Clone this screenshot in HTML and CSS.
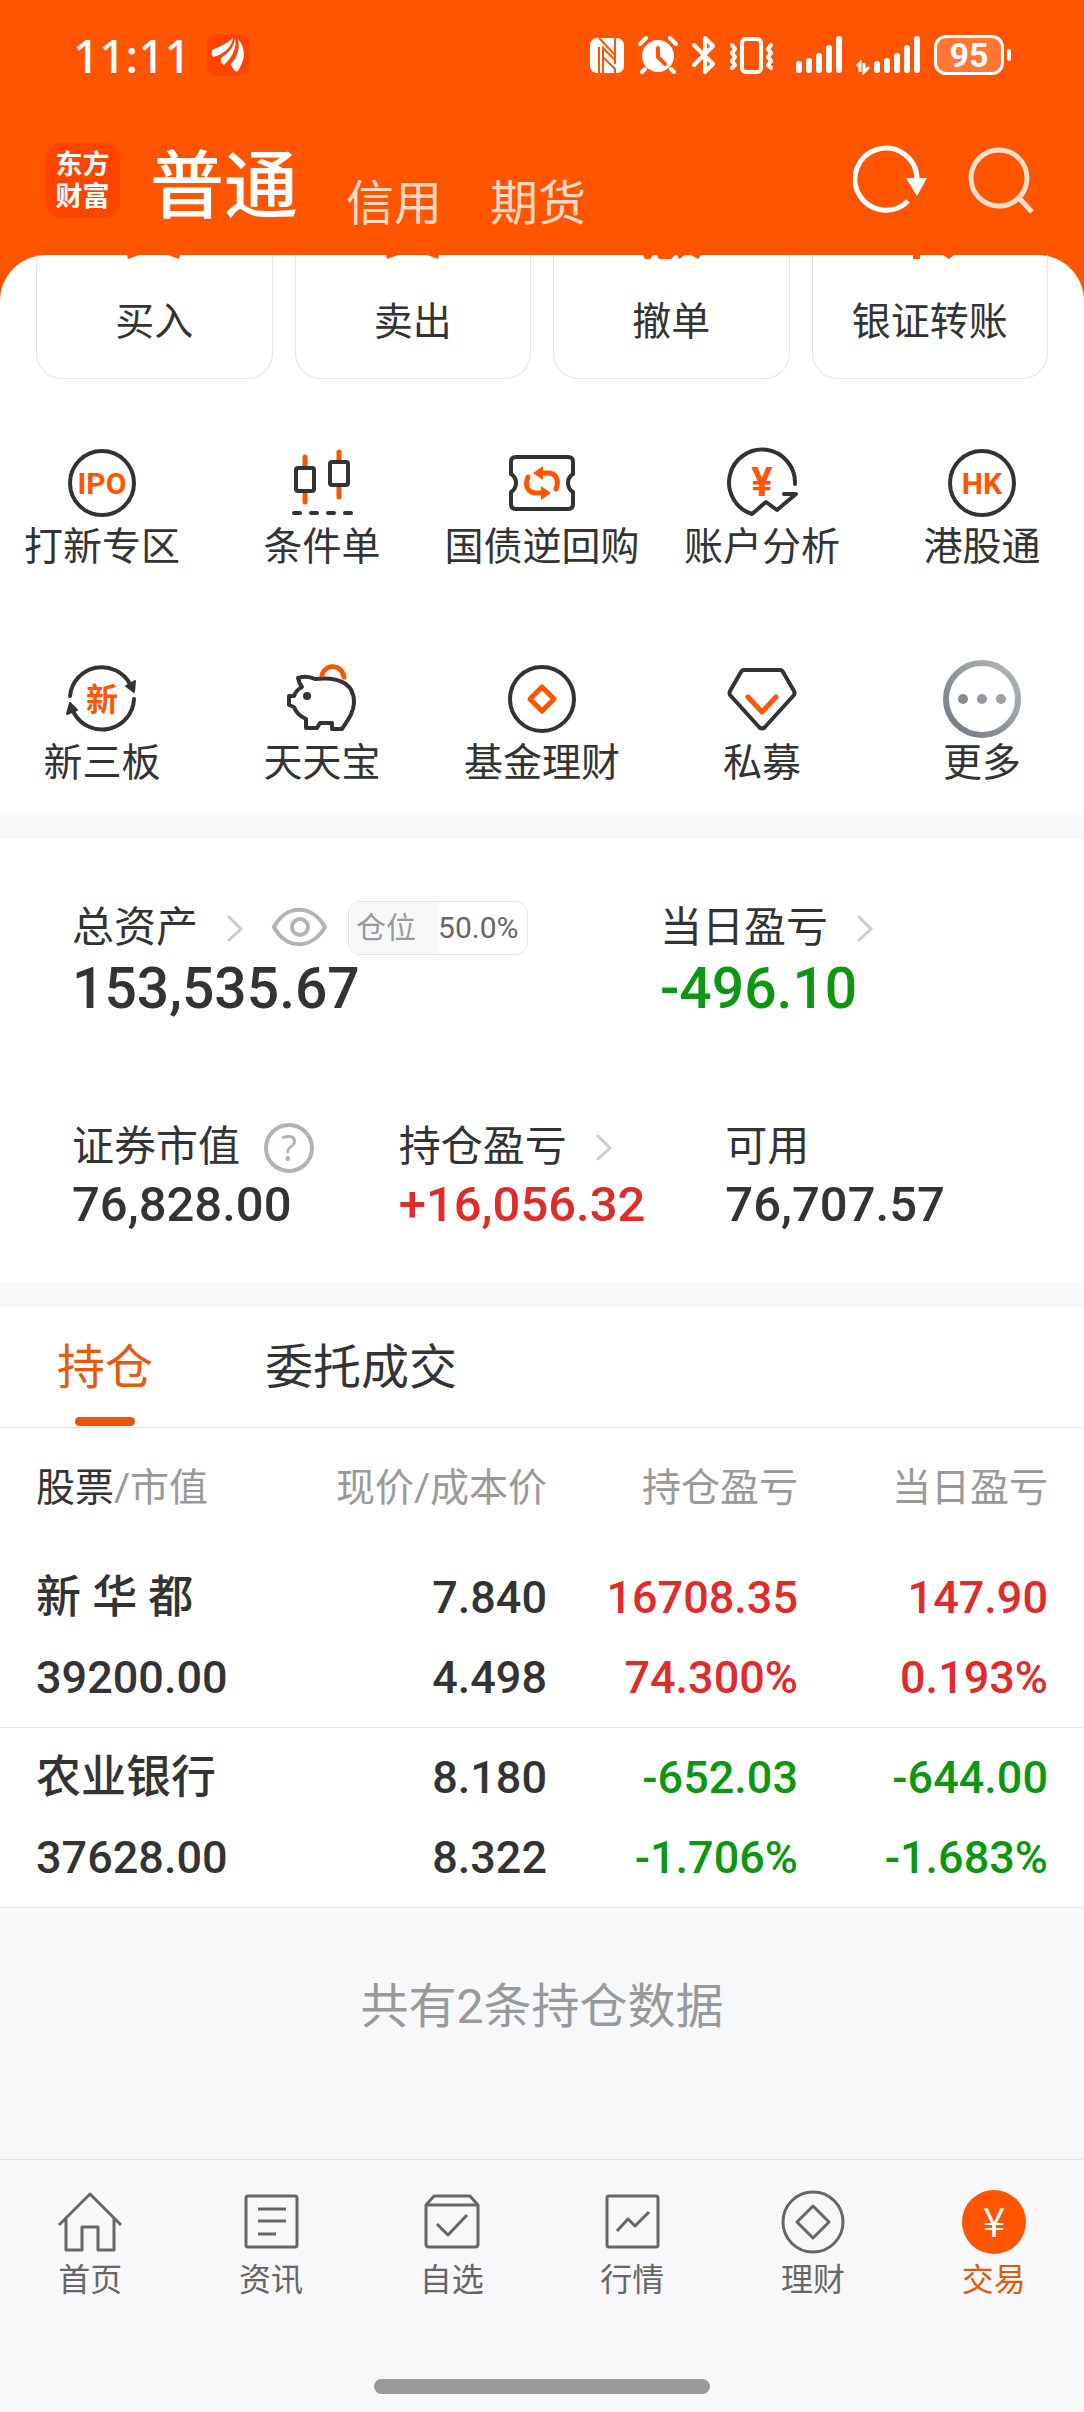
FILE: index.html
```html
<!DOCTYPE html>
<html lang="zh-CN">
<head>
    <meta charset="UTF-8">
    <meta name="viewport" content="width=device-width, initial-scale=1.0">
    <title>东方财富 - 交易</title>
    <link rel="stylesheet" href="styles.css">
</head>
<body>
    <header class="header">
        <div class="status-bar">
            <span class="clock">11:11</span>
            <svg class="app-badge" width="42" height="42" viewBox="0 0 42 42">
                <rect width="42" height="42" rx="10" fill="#ff4400"/>
                <path d="M5 16C14 12 21 9 26 4C25 12 18 20 6 23Q4 20 5 16Z" fill="#fff"/>
                <path d="M28 4C30 14 26 22 17 31Q13 29 14 24C22 19 27 13 28 4Z" fill="#fff"/>
                <path d="M31 5C39 14 39 26 30 38Q25 35 24 30C31 22 33 14 31 5Z" fill="#fff"/>
            </svg>
            <div class="status-icons">
                <svg width="34" height="44" viewBox="0 0 34 44">
                    <rect y="5" width="34" height="35" rx="7" fill="#fff"/>
                    <path d="M9 40V14M25 5V31" stroke="#ff5500" stroke-width="2"/>
                    <path d="M9 5L25 22V27L13 15V40M25 40V36L13 24" fill="none" stroke="#ff5500" stroke-width="2"/>
                </svg>
                <svg width="40" height="44" viewBox="0 0 40 44">
                    <circle cx="20" cy="23" r="16" fill="#fff"/>
                    <path d="M2 11L8 5M32 5L38 11M7 36L4 39M33 36L36 39" stroke="#fff" stroke-width="4" stroke-linecap="round"/>
                    <path d="M20 15V24L27 31" fill="none" stroke="#ff5500" stroke-width="4" stroke-linecap="round"/>
                </svg>
                <svg width="24" height="44" viewBox="0 0 24 44">
                    <path d="M2 12L21 31L13 39V5L21 13L2 32" fill="none" stroke="#fff" stroke-width="4" stroke-linecap="round" stroke-linejoin="round"/>
                </svg>
                <svg width="44" height="44" viewBox="0 0 44 44">
                    <rect x="12" y="6" width="19" height="33" rx="4" fill="none" stroke="#fff" stroke-width="4"/>
                    <path d="M2 12L5 16L2 20L5 24L2 28L5 32L2 35M41 12L38 16L41 20L38 24L41 28L38 32L41 35" fill="none" stroke="#fff" stroke-width="4" stroke-linecap="round" stroke-linejoin="round"/>
                </svg>
                <svg class="signal" width="46" height="44" viewBox="0 0 46 44">
                    <path d="M3 31V37M13 28V37M23 23V37M33 15V37M43 6V37" stroke="#fff" stroke-width="6" stroke-linecap="round"/>
                </svg>
                <svg width="64" height="44" viewBox="0 0 64 44">
                    <path d="M1 33L4 30V39M8 30V39L13 34" fill="none" stroke="#fff" stroke-width="3"/>
                    <path d="M21 31V37M31 28V37M41 23V37M51 15V37M61 6V37" stroke="#fff" stroke-width="6" stroke-linecap="round"/>
                </svg>
                <div class="battery">95</div>
            </div>
        </div>
        <div class="nav">
            <div class="logo">东方<br>财富</div>
            <nav class="accounts">
                <a href="#" class="account active">普通</a>
                <a href="#" class="account">信用</a>
                <a href="#" class="account">期货</a>
            </nav>
            <button type="button" class="icon-btn" aria-label="刷新">
                <svg width="76" height="70" viewBox="0 0 76 70">
                    <path d="M55 56A31 31 0 1 1 64 33" fill="none" stroke="#fff" stroke-width="5"/>
                    <path d="M53 33H74L64 51Z" fill="#fff"/>
                </svg>
            </button>
            <button type="button" class="icon-btn" aria-label="搜索">
                <svg width="70" height="70" viewBox="0 0 70 70">
                    <circle cx="31" cy="33" r="28" fill="none" stroke="#ffe0cf" stroke-width="5"/>
                    <path d="M51 53L64 67" stroke="#ffe0cf" stroke-width="5"/>
                </svg>
            </button>
        </div>
    </header>

    <main>
        <div class="quick">
            <section class="panel">
                <div class="cards">
                    <a href="#" class="card">
                        <svg width="60" height="4" viewBox="0 0 60 4"><path d="M3 0H15L4 4ZM44 0H56L55 4Z"/></svg>
                        <span>买入</span>
                    </a>
                    <a href="#" class="card">
                        <svg width="60" height="4" viewBox="0 0 60 4"><path d="M3 0H15L4 4ZM44 0H56L55 4Z"/></svg>
                        <span>卖出</span>
                    </a>
                    <a href="#" class="card">
                        <svg width="60" height="4" viewBox="0 0 60 4"><path d="M2 0H12L9 4H4ZM16 0H34L30 4H18ZM36 0H44L38 4ZM50 0H60L57 4Z"/></svg>
                        <span>撤单</span>
                    </a>
                    <a href="#" class="card">
                        <svg width="60" height="4" viewBox="0 0 60 4"><path d="M13 0H20V4H13ZM43 0H54L49 4Z"/></svg>
                        <span>银证转账</span>
                    </a>
                </div>
                <div class="menu">
                    <a href="#" class="menu-item">
                        <svg width="80" height="80" viewBox="0 0 80 80">
                            <circle class="line" cx="40" cy="40" r="32"/>
                            <text class="icon-text" x="40" y="51" font-size="30">IPO</text>
                        </svg>
                        <span>打新专区</span>
                    </a>
                    <a href="#" class="menu-item">
                        <svg width="80" height="80" viewBox="0 0 80 80">
                            <path class="accent" d="M23 14V23M23 50V59M57 9V18M57 45V54"/>
                            <rect class="line" x="14" y="25" width="18" height="23" rx="2"/>
                            <rect class="line" x="48" y="19" width="18" height="23" rx="2"/>
                            <path class="line" d="M12 70H18M29 70H35M46 70H52M63 70H69"/>
                        </svg>
                        <span>条件单</span>
                    </a>
                    <a href="#" class="menu-item">
                        <svg width="80" height="80" viewBox="0 0 80 80">
                            <path class="line" d="M14 14H66Q71 14 71 19V31Q66 34 66 40T71 49V61Q71 66 66 66H14Q9 66 9 61V49Q14 46 14 40T9 31V19Q9 14 14 14Z"/>
                            <path class="accent" d="M26 34C22 44 27 50 34 50H42M54 46C58 36 53 30 46 30H38"/>
                            <path d="M31 30L41 23V37ZM49 50L39 43V57Z" fill="#ff5500"/>
                        </svg>
                        <span>国债逆回购</span>
                    </a>
                    <a href="#" class="menu-item">
                        <svg width="80" height="80" viewBox="0 0 80 80">
                            <path class="line" d="M73 41A33 33 0 1 0 30 71L44 59L55 67L74 51H62"/>
                            <text class="icon-text" x="40" y="53" font-size="40">¥</text>
                        </svg>
                        <span>账户分析</span>
                    </a>
                    <a href="#" class="menu-item">
                        <svg width="80" height="80" viewBox="0 0 80 80">
                            <circle class="line" cx="40" cy="40" r="32"/>
                            <text class="icon-text" x="40" y="51" font-size="30">HK</text>
                        </svg>
                        <span>港股通</span>
                    </a>
                    <a href="#" class="menu-item">
                        <svg width="80" height="80" viewBox="0 0 80 80">
                            <path class="line" d="M8 37A32 32 0 0 1 68 25M72 40A32 32 0 0 1 12 54"/>
                            <path class="line solid" d="M64 27L73 22L72 33ZM8 44L15 51L5 55Z"/>
                            <text class="icon-text" x="40" y="52" font-size="32">新</text>
                        </svg>
                        <span>新三板</span>
                    </a>
                    <a href="#" class="menu-item">
                        <svg width="80" height="80" viewBox="0 0 80 80">
                            <path class="line" d="M16 19Q25 16 33 20C62 17 72 28 72 43C72 54 65 62 60 70H50V64H38L35 69H24V60Q15 56 12 48L7 46V37H12Q14 31 20 28Q17 24 16 19Z"/>
                            <circle cx="25" cy="37" r="4" fill="#333"/>
                            <path class="accent" d="M40 16C43 5 59 4 62 18"/>
                        </svg>
                        <span>天天宝</span>
                    </a>
                    <a href="#" class="menu-item">
                        <svg width="80" height="80" viewBox="0 0 80 80">
                            <circle class="line" cx="40" cy="40" r="32"/>
                            <path class="accent" d="M40 28L52 40L40 52L28 40Z"/>
                        </svg>
                        <span>基金理财</span>
                    </a>
                    <a href="#" class="menu-item">
                        <svg width="80" height="80" viewBox="0 0 80 80">
                            <path class="line" d="M22 11H58Q60 11 61 13L72 32Q73 34 72 36L43 68Q40 71 37 68L8 36Q7 34 8 32L19 13Q20 11 22 11Z"/>
                            <path class="accent" d="M26 38L40 53L54 38"/>
                        </svg>
                        <span>私募</span>
                    </a>
                    <a href="#" class="menu-item">
                        <svg width="80" height="80" viewBox="0 0 80 80">
                            <defs>
                                <linearGradient id="moreGray" x1="0" y1="1" x2="1" y2="0">
                                    <stop offset="0" stop-color="#70767e"/>
                                    <stop offset="1" stop-color="#b4b9bc"/>
                                </linearGradient>
                            </defs>
                            <circle cx="40" cy="40" r="36" fill="none" stroke="url(#moreGray)" stroke-width="6"/>
                            <circle cx="21" cy="40" r="5" fill="#868c93"/>
                            <circle cx="40" cy="40" r="5" fill="#92989d"/>
                            <circle cx="59" cy="40" r="5" fill="#9ea3a8"/>
                        </svg>
                        <span>更多</span>
                    </a>
                </div>
            </section>
        </div>

        <section class="assets">
            <div class="asset-row">
                <div class="metric total">
                    <div class="metric-label">
                        <span>总资产</span>
                        <svg width="32" height="28" viewBox="0 0 32 28"><path class="chevron" d="M11 3L23 15L11 26"/></svg>
                        <svg width="58" height="42" viewBox="0 0 58 42">
                            <path class="hint" d="M4 20C16 -3 42 -3 55 20C42 43 16 43 4 20Z"/>
                            <circle class="hint" cx="30" cy="20" r="8"/>
                        </svg>
                        <div class="position"><span class="position-name">仓位</span><span>50.0%</span></div>
                    </div>
                    <div class="metric-value large">153,535.67</div>
                </div>
                <div class="metric">
                    <div class="metric-label">
                        <span>当日盈亏</span>
                        <svg width="32" height="28" viewBox="0 0 32 28"><path class="chevron" d="M11 3L23 15L11 26"/></svg>
                    </div>
                    <div class="metric-value large down">-496.10</div>
                </div>
            </div>
            <div class="asset-row">
                <div class="metric">
                    <div class="metric-label">
                        <span>证券市值</span>
                        <svg width="56" height="52" viewBox="0 0 56 52">
                            <circle class="hint" cx="29" cy="27" r="23"/>
                            <text x="29" y="40" class="hint-text">?</text>
                        </svg>
                    </div>
                    <div class="metric-value">76,828.00</div>
                </div>
                <div class="metric">
                    <div class="metric-label">
                        <span>持仓盈亏</span>
                        <svg width="32" height="28" viewBox="0 0 32 28"><path class="chevron" d="M11 3L23 15L11 26"/></svg>
                    </div>
                    <div class="metric-value up">+16,056.32</div>
                </div>
                <div class="metric">
                    <div class="metric-label"><span>可用</span></div>
                    <div class="metric-value">76,707.57</div>
                </div>
            </div>
        </section>

        <section class="holdings">
            <div class="tabs">
                <button type="button" class="tab active">持仓</button>
                <button type="button" class="tab">委托成交</button>
            </div>
            <table>
                <thead>
                    <tr>
                        <th><span class="sorted">股票</span>/市值</th>
                        <th>现价/成本价</th>
                        <th>持仓盈亏</th>
                        <th>当日盈亏</th>
                    </tr>
                </thead>
                <tbody>
                    <tr>
                        <td>新 华 都<br>39200.00</td>
                        <td>7.840<br>4.498</td>
                        <td class="up">16708.35<br>74.300%</td>
                        <td class="up">147.90<br>0.193%</td>
                    </tr>
                    <tr>
                        <td>农业银行<br>37628.00</td>
                        <td>8.180<br>8.322</td>
                        <td class="down">-652.03<br>-1.706%</td>
                        <td class="down">-644.00<br>-1.683%</td>
                    </tr>
                </tbody>
            </table>
        </section>
        <p class="summary">共有2条持仓数据</p>
    </main>

    <footer class="footer">
        <nav class="tabbar">
            <a href="#" class="tabbar-item">
                <svg width="70" height="70" viewBox="0 0 70 70"><path d="M4 38L35 7L66 38M11 32V63H27V40H43V63H59V32"/></svg>
                <span>首页</span>
            </a>
            <a href="#" class="tabbar-item">
                <svg width="70" height="70" viewBox="0 0 70 70"><rect x="10" y="9" width="51" height="51" rx="2"/><path d="M22 22H50M22 34H50M22 47H40"/></svg>
                <span>资讯</span>
            </a>
            <a href="#" class="tabbar-item">
                <svg width="70" height="70" viewBox="0 0 70 70"><path d="M9 18L17 9H53L61 18V57Q61 60 58 60H12Q9 60 9 57ZM9 18H61M20 37L31 48L50 28"/></svg>
                <span>自选</span>
            </a>
            <a href="#" class="tabbar-item">
                <svg width="70" height="70" viewBox="0 0 70 70"><rect x="10" y="9" width="51" height="51" rx="2"/><path d="M20 44L31 32L38 39L52 25"/></svg>
                <span>行情</span>
            </a>
            <a href="#" class="tabbar-item">
                <svg width="70" height="70" viewBox="0 0 70 70"><circle cx="35" cy="35" r="30"/><path d="M35 19L51 35L35 51L19 35Z"/></svg>
                <span>理财</span>
            </a>
            <a href="#" class="tabbar-item active">
                <svg width="70" height="70" viewBox="0 0 70 70"><circle class="coin" cx="35" cy="35" r="32"/><text x="35" y="50" class="coin-text">¥</text></svg>
                <span>交易</span>
            </a>
        </nav>
        <div class="home-indicator"></div>
    </footer>
</body>
</html>
```
FILE: styles.css
```css
* { box-sizing: border-box; }
body {
    margin: 0;
    min-height: 100vh;
    display: flex;
    flex-direction: column;
    font-family: Roboto, "Noto Sans CJK SC", sans-serif;
    color: #333;
    background: #f7f8fa;
}
a { color: inherit; text-decoration: none; }
button { border: none; background: none; padding: 0; font-family: inherit; color: inherit; cursor: pointer; }
svg { display: block; flex: none; }
main { flex: 1; }
.up { color: #e02b2b; }
.down { color: #0b970f; }

/* Header */
.header { background: #ff5500; color: #fff; padding-top: 32px; }
.status-bar { display: flex; align-items: center; height: 46px; padding: 0 80px 0 73px; }
.clock { font-family: "Noto Sans", sans-serif; font-size: 46px; line-height: 46px; font-weight: 500; }
.app-badge { margin-left: 16px; }
.status-icons { display: flex; align-items: center; gap: 14px; margin-left: auto; }
.signal { margin-left: 8px; }
.battery {
    position: relative;
    width: 70px;
    height: 40px;
    border: 3px solid #fff;
    border-radius: 12px;
    background: #ff7733;
    font-size: 34px;
    line-height: 34px;
    font-weight: 700;
    text-align: center;
}
.battery::after {
    content: "";
    position: absolute;
    top: 11px;
    right: -10px;
    width: 4px;
    height: 12px;
    border-radius: 2px;
    background: #fff;
}
.nav { display: flex; align-items: center; padding: 58px 46px 31px 45px; }
.logo {
    width: 75px;
    height: 75px;
    padding-top: 6px;
    border-radius: 16px;
    background: #ff4400;
    font-size: 27px;
    line-height: 32px;
    font-weight: 700;
    text-align: center;
}
.accounts { display: flex; align-items: flex-end; gap: 48px; margin-left: 30px; margin-right: auto; font-family: "Noto Sans CJK SC", sans-serif; }
.account { font-size: 48px; line-height: 50px; color: #ffd9c6; }
.account.active { font-size: 74px; line-height: 88px; font-weight: 500; color: #fff; }
.icon-btn + .icon-btn { margin-left: 39px; }

/* Quick actions */
.quick { overflow: hidden; background: #ff5500; }
.panel { padding-bottom: 28px; background: #fff; border-radius: 46px 46px 0 0; }
.cards { display: grid; grid-template-columns: repeat(4, 1fr); gap: 22px; padding: 0 36px; }
.card {
    display: flex;
    flex-direction: column;
    align-items: center;
    gap: 38px;
    padding-bottom: 31px;
    border: 1px solid #e4e4e4;
    border-top: none;
    border-radius: 0 0 26px 26px;
    font-size: 39px;
    line-height: 50px;
}
.card svg { fill: #ff5500; }
.menu { display: grid; grid-template-columns: repeat(5, 1fr); row-gap: 88px; margin: 64px -8px 0; }
.menu-item { display: flex; flex-direction: column; align-items: center; font-size: 39px; line-height: 48px; white-space: nowrap; }
.line { fill: none; stroke: #333; stroke-width: 4; stroke-linecap: round; stroke-linejoin: round; }
.line.solid { fill: #333; stroke-width: 2; }
.accent { fill: none; stroke: #ff5500; stroke-width: 5; stroke-linecap: round; stroke-linejoin: round; }
.icon-text { font-weight: 700; fill: #ff5500; text-anchor: middle; }

/* Assets */
.assets { margin-top: 24px; padding: 62px 32px 47px 72px; background: #fff; }
.asset-row { display: flex; }
.asset-row + .asset-row { margin-top: 97px; }
.metric { flex: 1; }
.metric.total { flex: 0 0 60%; }
.metric-label { display: flex; align-items: center; gap: 20px; height: 54px; font-size: 42px; line-height: 54px; white-space: nowrap; }
.metric-value { font-size: 49px; line-height: 62px; font-weight: 500; }
.metric-value.large { font-size: 57px; line-height: 68px; }
.chevron { fill: none; stroke: #ccc; stroke-width: 3; stroke-linecap: round; }
.hint { fill: none; stroke: #b3b3b3; stroke-width: 4; }
.hint-text { font-family: "Noto Sans", sans-serif; font-size: 36px; fill: #b3b3b3; text-anchor: middle; }
.position {
    display: flex;
    width: 180px;
    height: 54px;
    border: 1px solid #e2e2e4;
    border-radius: 12px;
    overflow: hidden;
    font-size: 30px;
    line-height: 52px;
    color: #666;
}
.position-name { width: 89px; padding-left: 7px; background: #f7f8fa; color: #999; }

/* Holdings */
.holdings { margin-top: 24px; background: #fff; }
.tabs { display: flex; gap: 112px; height: 121px; padding-left: 57px; border-bottom: 1px solid #e4e4e6; }
.tab { position: relative; height: 120px; font-size: 48px; line-height: 122px; }
.tab.active { color: #e8590c; }
.tab.active::after {
    content: "";
    position: absolute;
    bottom: 1px;
    left: 18px;
    right: 18px;
    height: 9px;
    border-radius: 5px;
    background: #e95504;
}
table { width: 100%; border-collapse: collapse; table-layout: fixed; }
th, td { padding: 0; text-align: right; white-space: nowrap; }
th { height: 120px; font-size: 39px; line-height: 50px; font-weight: 400; color: #999; }
th:nth-child(2), th:nth-child(3) { width: 251px; }
th:last-child { width: 286px; }
th:first-child, td:first-child { padding-left: 36px; text-align: left; }
th:last-child, td:last-child { padding-right: 36px; }
td { padding-top: 10px; padding-bottom: 9px; border-bottom: 1px solid #e4e4e6; font-size: 45px; line-height: 80px; font-weight: 500; }
.sorted { color: #333; }
.summary { margin: 0; padding: 66px 0; font-size: 48px; line-height: 66px; color: #999; text-align: center; }

/* Bottom bar */
.footer { padding-bottom: 18px; background: #f8f8fa; border-top: 1px solid #e2e2e4; }
.tabbar { display: grid; grid-template-columns: repeat(6, 1fr); padding-top: 27px; }
.tabbar-item { display: flex; flex-direction: column; align-items: center; font-size: 32px; line-height: 46px; color: #666; }
.tabbar-item.active { color: #e05a10; }
.tabbar svg { fill: none; stroke: #666; stroke-width: 3; stroke-linejoin: round; }
.tabbar .coin { fill: #ff5500; stroke: none; }
.coin-text { font-family: "Noto Sans CJK SC", sans-serif; font-size: 40px; fill: #fff; stroke: none; text-anchor: middle; }
.home-indicator { width: 31%; height: 15px; margin: 76px auto 0; border-radius: 8px; background: #999; }
```
